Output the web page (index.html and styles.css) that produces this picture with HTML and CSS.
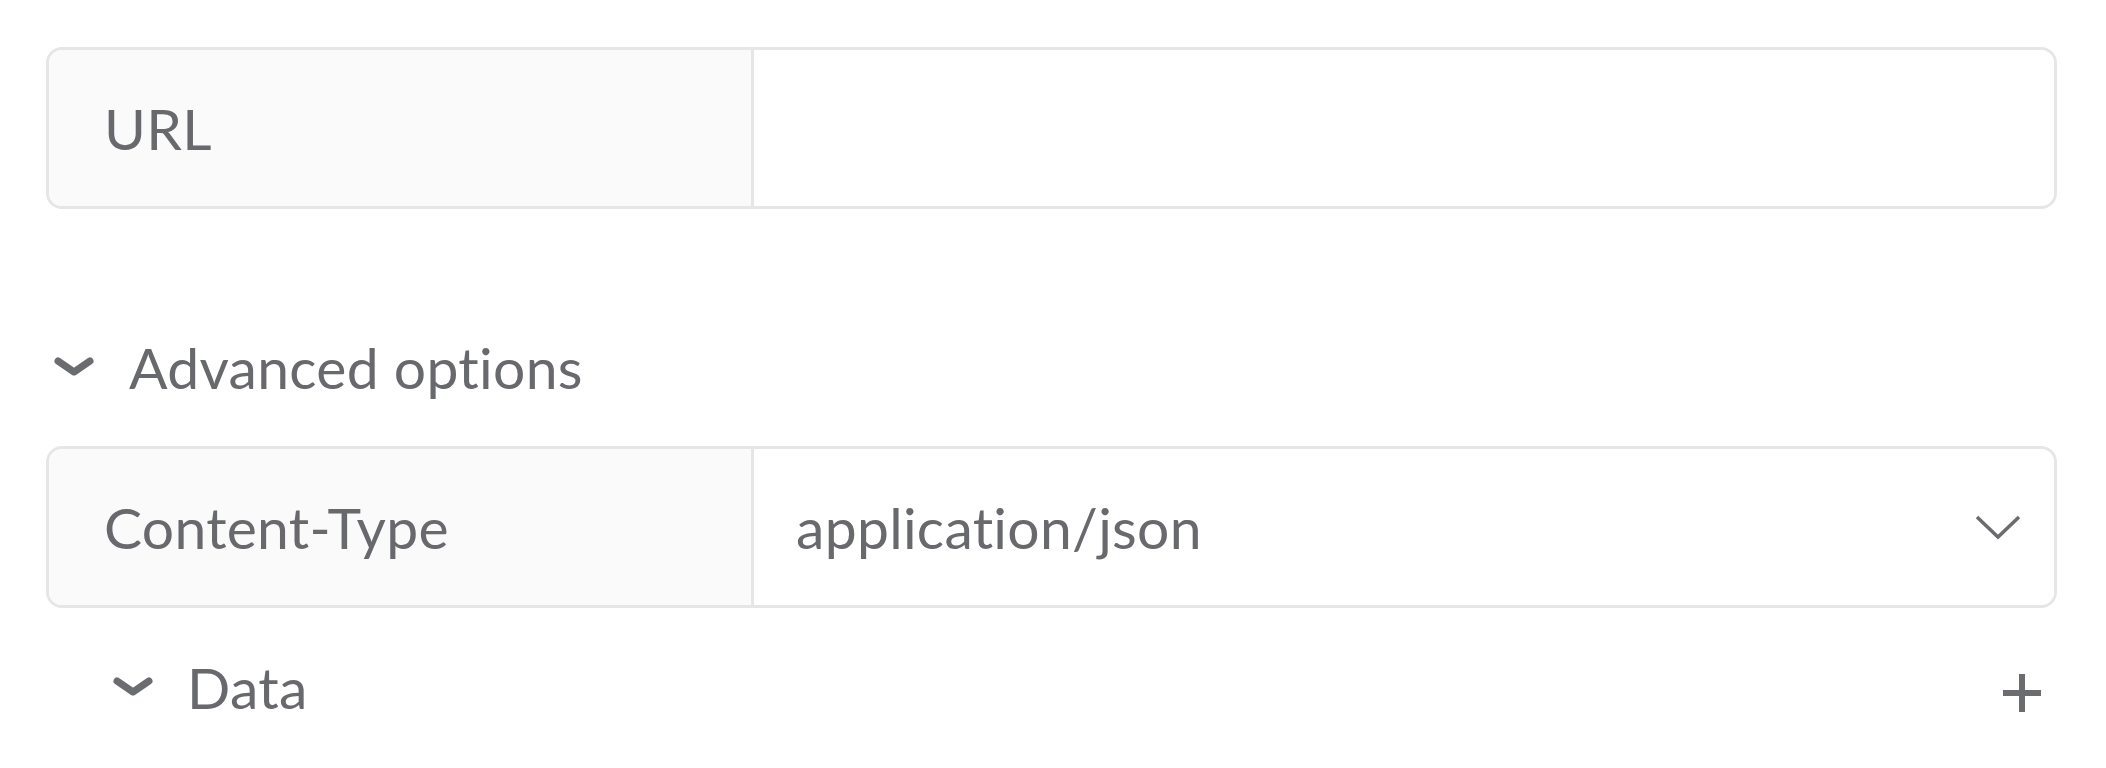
FILE: index.html
```html
<!DOCTYPE html>
<html>
<head>
<meta charset="utf-8">
<link rel="stylesheet" href="styles.css">
</head>
<body>
<div class="form">
  <div class="field">
    <div class="label">URL</div>
    <div class="value"></div>
  </div>

  <div class="section-head">
    <svg class="chev-bold" viewBox="0 0 40 20" width="40" height="20"><path d="M4 4 L20 15 L36 4" fill="none" stroke="#6b6c70" stroke-width="7" stroke-linecap="round" stroke-linejoin="round"/></svg>
    <span>Advanced options</span>
  </div>

  <div class="field">
    <div class="label">Content-Type</div>
    <div class="value select">
      <span>application/json</span>
      <svg class="chev-thin" viewBox="0 0 46 26" width="46" height="26"><path d="M2 3 L23 23 L44 3" fill="none" stroke="#6b6c70" stroke-width="3.5"/></svg>
    </div>
  </div>

  <div class="sub-head">
    <div class="sub-left">
      <svg class="chev-bold" viewBox="0 0 40 20" width="40" height="20"><path d="M4 4 L20 15 L36 4" fill="none" stroke="#6b6c70" stroke-width="7" stroke-linecap="round" stroke-linejoin="round"/></svg>
      <span>Data</span>
    </div>
    <svg class="plus" viewBox="0 0 40 40" width="40" height="40"><path d="M20 1 V39 M1 20 H39" fill="none" stroke="#6b6c70" stroke-width="6"/></svg>
  </div>
</div>
</body>
</html>
```

FILE: styles.css
```css
html, body {
  margin: 0;
  padding: 0;
  background: #ffffff;
}
body {
  font-family: Lato, "Noto Sans", sans-serif;
  color: #68696d;
  font-size: 57px;
  font-variant-ligatures: none;
  letter-spacing: 0.3px;
}
.form {
  padding: 47px 49px 0 46px;
}
.field {
  display: flex;
  height: 162px;
  box-sizing: border-box;
  border: 3px solid #e6e6e6;
  border-radius: 16px;
  overflow: hidden;
}
.label {
  width: 705px;
  flex: none;
  box-sizing: border-box;
  background: #fafafa;
  border-right: 3px solid #e6e6e6;
  display: flex;
  align-items: center;
  padding-left: 55px;
}
.value {
  flex: 1;
  display: flex;
  align-items: center;
  background: #fff;
}
.select {
  justify-content: space-between;
  padding-left: 42px;
  padding-right: 33px;
}
.section-head {
  display: flex;
  align-items: center;
  height: 80px;
  margin-top: 118px;
  margin-bottom: 39px;
  padding-left: 8px;
  gap: 35px;
}
.sub-head {
  display: flex;
  align-items: center;
  justify-content: space-between;
  height: 80px;
  margin-top: 39px;
  padding-left: 67px;
  padding-right: 15px;
}
.sub-left {
  display: flex;
  align-items: center;
  gap: 34px;
}
.chev-bold, .chev-thin, .plus {
  display: block;
  flex: none;
}
.plus {
  margin-top: 12px;
}
```
